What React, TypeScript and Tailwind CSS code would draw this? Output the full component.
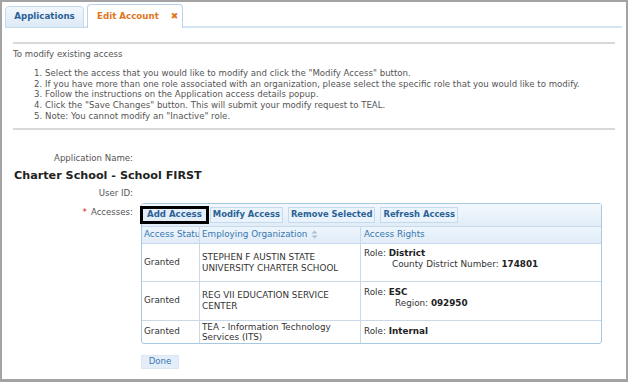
import React from "react";

const blue = "text-[#2b6296]";

function ToolBtn({ label, highlight }: { label: string; highlight?: boolean }) {
  if (highlight) {
    return (
      <div className="-ml-[2px] -mr-[4px] border-[3px] border-black">
        <div className={`h-[12px] px-[4px] flex items-center bg-[#e3eef9] font-bold text-[8.6px] ${blue}`}>{label}</div>
      </div>
    );
  }
  return (
    <div className={`h-[16px] px-[2px] flex items-center border border-[#c5dbec] bg-[#eaf2fb] font-bold text-[8.4px] ${blue}`}>{label}</div>
  );
}

function SortIcon() {
  return (
    <svg width="7" height="9" viewBox="0 0 7 9" className="ml-[4px]">
      <path d="M0.5 3.5 L3.5 0.5 L6.5 3.5 Z" fill="#a9bfd4" />
      <path d="M0.5 5.5 L3.5 8.5 L6.5 5.5 Z" fill="#a9bfd4" />
    </svg>
  );
}

export default function App() {
  return (
    <div className="w-[628px] h-[382px] bg-white border-t-2 border-l-2 border-r-2 border-b-[3px] border-[#a3a3a3] font-['DejaVu_Sans',sans-serif] text-[8.6px] text-[#555] overflow-hidden">
      {/* Tabs */}
      <div className="mt-[2px] ml-[3px] mr-[4px] h-[24px] flex items-end gap-[3px] border-b-2 border-[#d3e3f2]">
        <div className={`w-[79px] h-[22px] -mb-[2px] flex items-center justify-center rounded-t-[4px] border border-[#c5dbec] bg-gradient-to-b from-[#f2f7fc] to-[#dce9f6] font-bold text-[8.7px] ${blue}`}>
          Applications
        </div>
        <div className="w-[96px] h-[24px] -mb-[2px] flex items-center rounded-t-[4px] border border-b-0 border-[#b9d4ec] bg-white font-bold text-[8.7px] text-[#e0761d] pl-[9px]">
          <span>Edit Account</span>
          <span className="ml-[12px] text-[9px]">✖</span>
        </div>
      </div>

      <div className="pl-[11px] pr-[11px]">
        <div className="mt-[14px] h-[2px] bg-[#d9d9d9]" />
        <div className="mt-[5px] leading-[11px]">To modify existing access</div>
        <ol className="mt-[8px] pl-[32px] list-decimal leading-[10.7px]">
          <li>Select the access that you would like to modify and click the "Modify Access" button.</li>
          <li>If you have more than one role associated with an organization, please select the specific role that you would like to modify.</li>
          <li>Follow the instructions on the Application access details popup.</li>
          <li>Click the "Save Changes" button. This will submit your modify request to TEAL.</li>
          <li>Note: You cannot modify an "Inactive" role.</li>
        </ol>
        <div className="mt-[6px] h-[2px] bg-[#d9d9d9]" />

        {/* Form */}
        <div className="mt-[23px] w-[120px] text-right leading-[11px]">Application Name:</div>
        <div className="mt-[5px] ml-[1px] leading-[14px] text-[11.2px] font-bold text-[#222]">Charter School - School FIRST</div>
        <div className="mt-[5px] w-[120px] text-right leading-[11px]">User ID:</div>

        <div className="mt-[4px] flex items-start">
          <div className="w-[120px] mt-[4px] text-right leading-[11px]">
            <span className="text-[#d02020] mr-[4px]">*</span>Accesses:
          </div>
          <div className="ml-[8px] w-[461px]">
            <div className="rounded-[3px] border border-[#a6c9e2] text-[#333] text-[8.8px]">
              {/* Toolbar */}
              <div className="h-[23px] flex items-center gap-[5px] bg-gradient-to-b from-[#f3f8fd] to-[#e2edf8] border-b border-[#c5dbec]">
                <ToolBtn label="Add Access" highlight />
                <ToolBtn label="Modify Access" />
                <ToolBtn label="Remove Selected" />
                <ToolBtn label="Refresh Access" />
              </div>
              {/* Header */}
              <div className="h-[17px] flex bg-gradient-to-b from-[#eef5fc] to-[#e1ecf8] border-b border-[#c5dbec] text-[#3677b0]">
                <div className="w-[58px] pl-[2px] flex items-center overflow-hidden whitespace-nowrap border-r border-[#c5dbec]">Access Status</div>
                <div className="w-[161px] pl-[2px] flex items-center border-r border-[#c5dbec]">
                  Employing Organization<SortIcon />
                </div>
                <div className="flex-1 pl-[3px] flex items-center">Access Rights</div>
              </div>
              {/* Rows */}
              <div className="h-[38px] flex border-b border-[#c9d9e8]">
                <div className="w-[58px] pl-[2px] pt-[1px] flex items-center border-r border-[#c9d9e8]">Granted</div>
                <div className="w-[161px] pl-[2px] pt-[1px] flex items-center leading-[10.5px] border-r border-[#c9d9e8]">
                  STEPHEN F AUSTIN STATE<br />UNIVERSITY CHARTER SCHOOL
                </div>
                <div className="flex-1 pl-[3px] pt-[4px] leading-[11.5px]">
                  <div>Role: <b className="text-[#222]">District</b></div>
                  <div className="pl-[28px]">County District Number: <b className="text-[#222]">174801</b></div>
                </div>
              </div>
              <div className="h-[39px] flex border-b border-[#c9d9e8]">
                <div className="w-[58px] pl-[2px] flex items-center border-r border-[#c9d9e8]">Granted</div>
                <div className="w-[161px] pl-[2px] flex items-center leading-[10.5px] border-r border-[#c9d9e8]">
                  REG VII EDUCATION SERVICE<br />CENTER
                </div>
                <div className="flex-1 pl-[3px] pt-[5px] leading-[11px]">
                  <div>Role: <b className="text-[#222]">ESC</b></div>
                  <div className="pl-[31px]">Region: <b className="text-[#222]">092950</b></div>
                </div>
              </div>
              <div className="h-[22px] flex">
                <div className="w-[58px] pl-[2px] flex items-center border-r border-[#c9d9e8]">Granted</div>
                <div className="w-[161px] pl-[2px] flex items-center leading-[10px] border-r border-[#c9d9e8]">
                  TEA - Information Technology<br />Services (ITS)
                </div>
                <div className="flex-1 pl-[3px] flex items-center">
                  <span>Role: <b className="text-[#222]">Internal</b></span>
                </div>
              </div>
            </div>
            <div className="mt-[11px] w-[38px] h-[14px] flex items-center justify-center bg-[#e4eef9] border border-[#dbe7f4] text-[#3677b0]">Done</div>
          </div>
        </div>
      </div>
    </div>
  );
}
